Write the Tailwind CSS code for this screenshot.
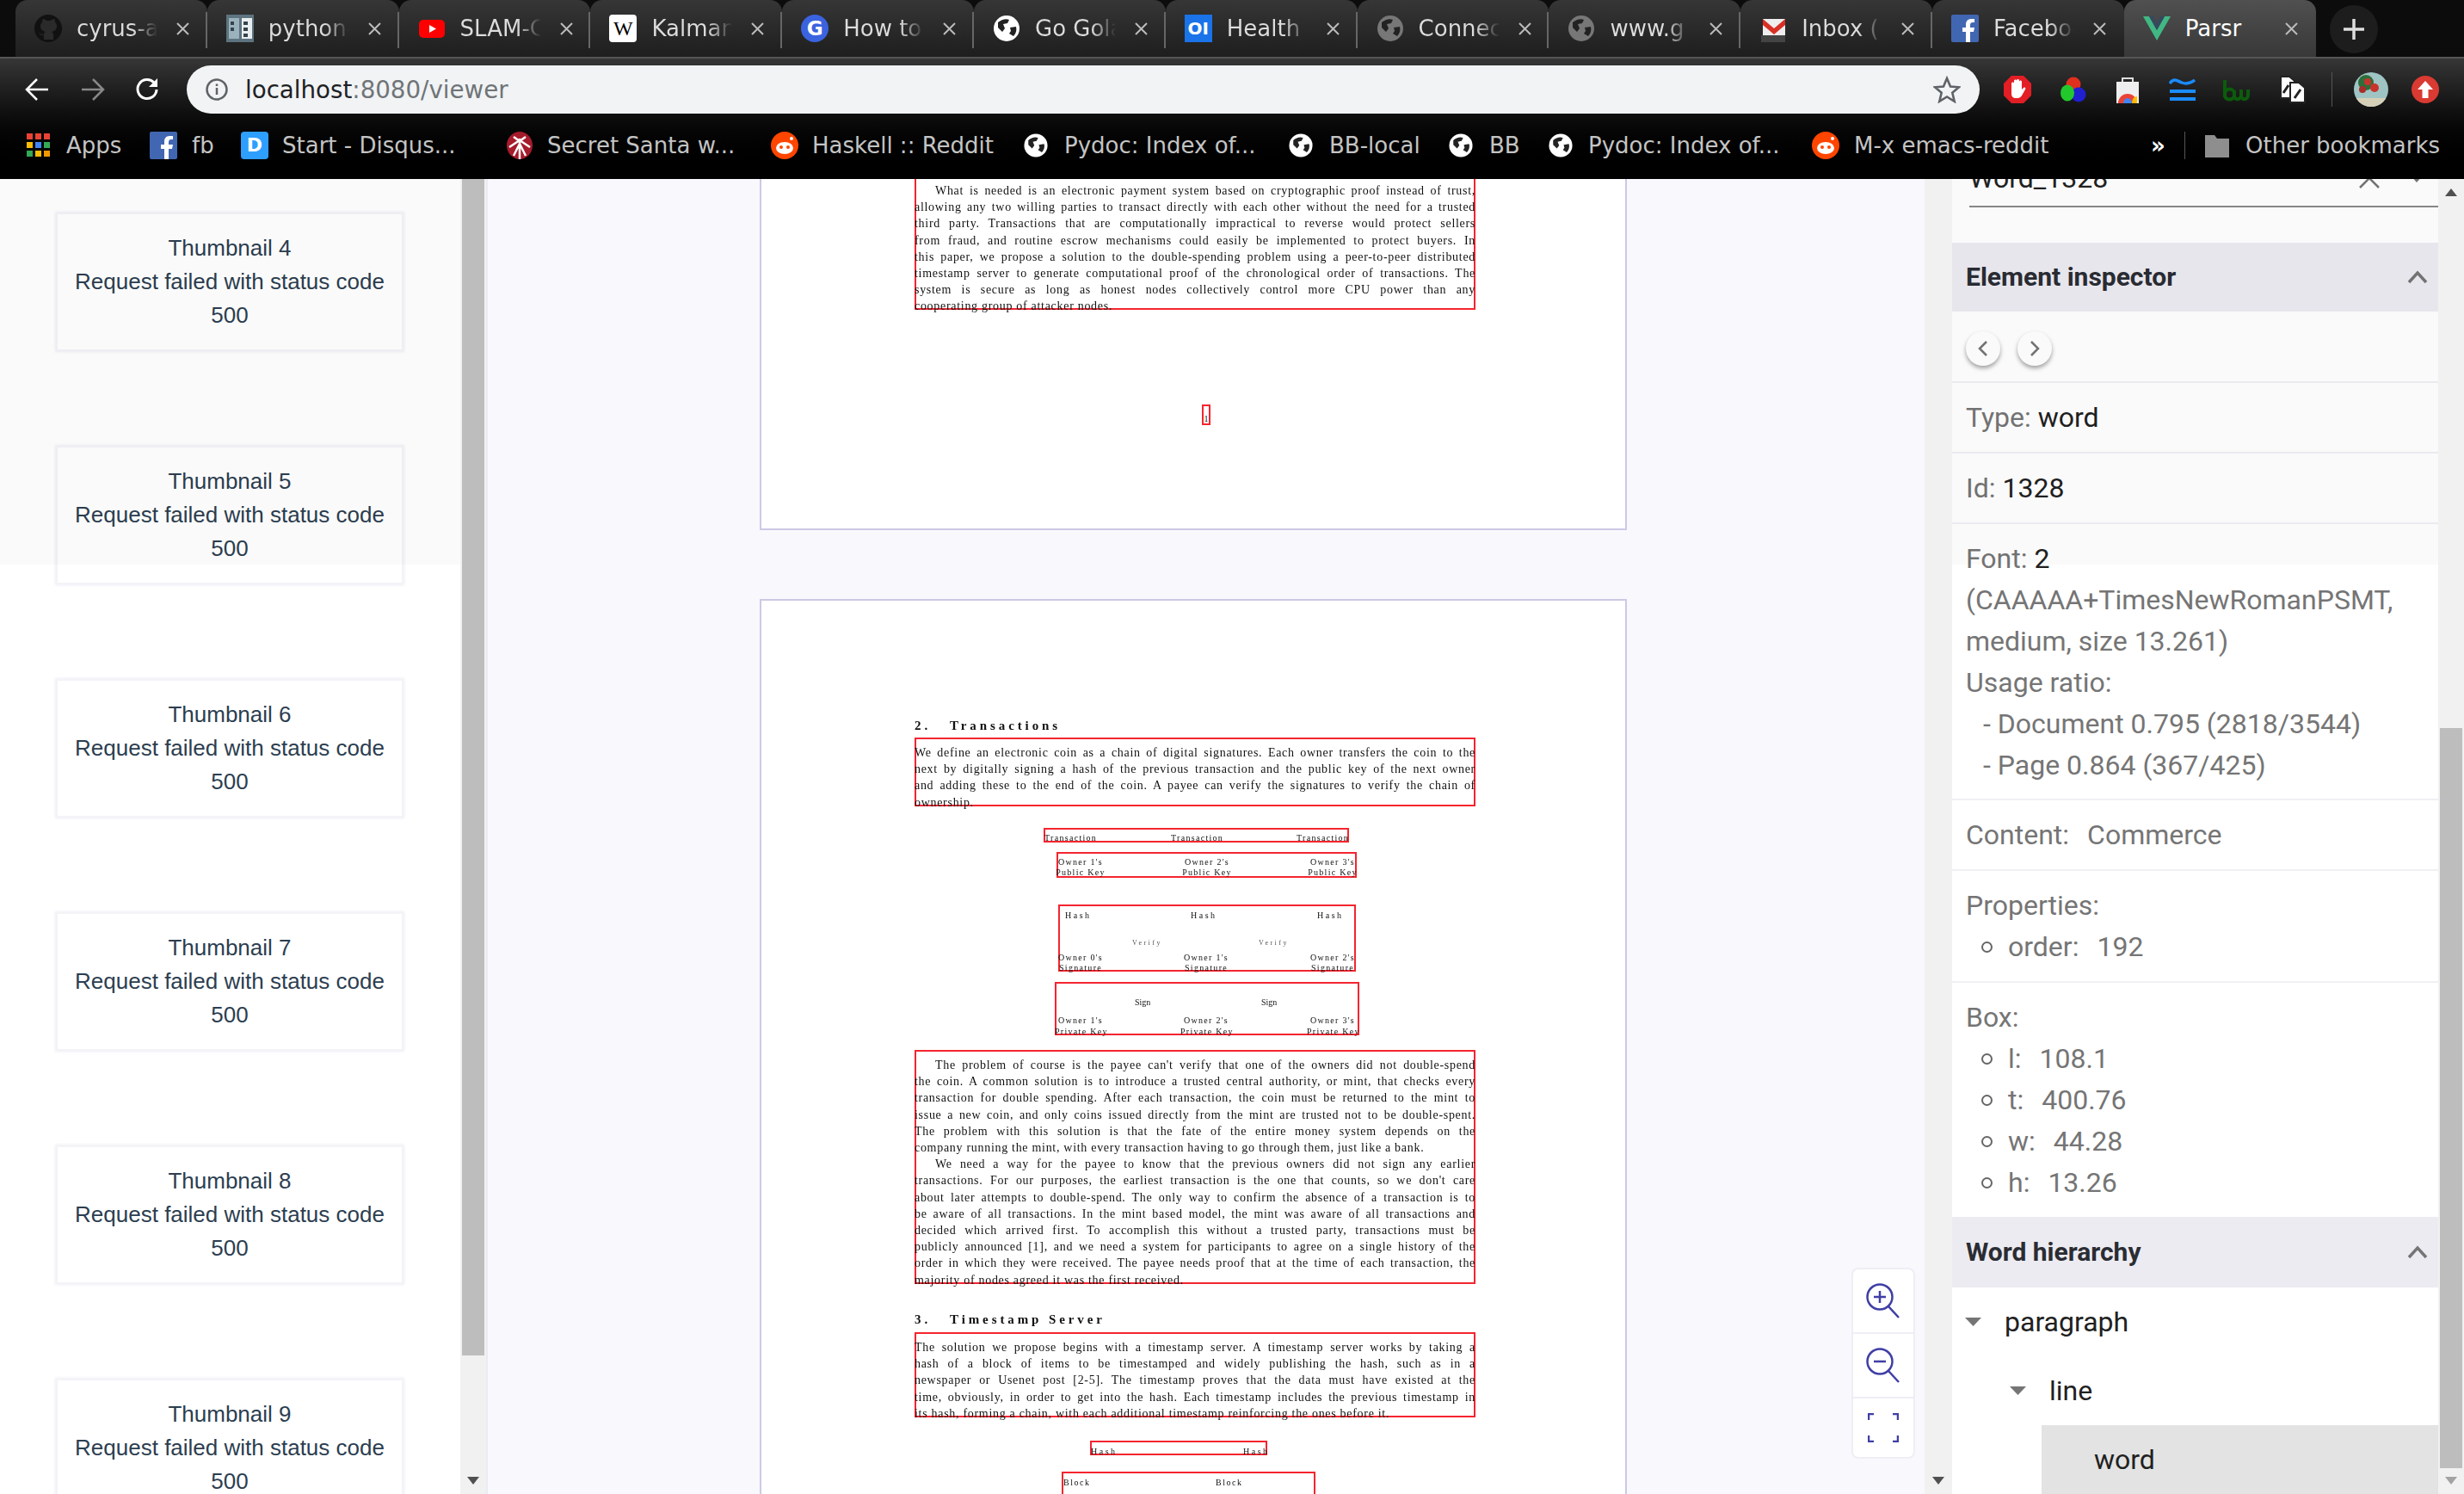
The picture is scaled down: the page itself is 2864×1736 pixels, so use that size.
<!DOCTYPE html>
<html><head><meta charset="utf-8"><title>Parsr</title>
<script src="https://cdn.jsdelivr.net/npm/@tailwindcss/browser@4"></script></head>
<body class="w-[2864px] h-[1736px] overflow-hidden bg-white font-['Roboto',sans-serif]">
<!-- browser chrome -->
<header class="h-[208px] bg-linear-to-b from-[#363636] from-[33%] via-[#0c0c0c] via-[66%] to-black text-[#c4c4c4] font-['DejaVu_Sans',sans-serif]">
  <div class="h-[66px] bg-[#0c0c0c] flex pl-[18px] items-stretch">
    <div class="w-[222.8px] h-[66px] rounded-t-[14px] bg-linear-to-b from-[#363636] to-[#1e1e1e] border-r-2 border-[#555] [border-image:linear-gradient(transparent_22%,#666_22%,#666_84%,transparent_84%)_1] flex items-center pl-[22px] gap-[17px] relative">
      <svg class="w-8 h-8 shrink-0" viewBox="0 0 32 32"><circle cx="16" cy="16" r="16" fill="#111"/><path d="M11 29v-5c-4 1-5-2-6-3 3 1 4 3 6 2 0-2 1-3 2-3-4-1-6-3-6-7 0-2 1-3 2-4 0-2 0-3 1-4 2 0 3 1 4 2h5c1-1 2-2 4-2 1 1 1 2 1 4 1 1 2 2 2 4 0 4-2 6-6 7 1 1 2 2 2 3v6z" fill="#2a2a2a"/></svg>
      <span class="w-[94px] overflow-hidden whitespace-nowrap text-[26px] bg-linear-to-r from-[#ddd] from-70% to-transparent bg-clip-text text-transparent">cyrus-a</span>
      <svg class="w-[15px] h-[15px] absolute left-[187px] top-[26px]" viewBox="0 0 15 15"><path d="M1 1l13 13M14 1L1 14" stroke="#bbb" stroke-width="2"/></svg>
    </div>
    <div class="w-[222.8px] h-[66px] rounded-t-[14px] bg-linear-to-b from-[#363636] to-[#1e1e1e] border-r-2 border-[#555] [border-image:linear-gradient(transparent_22%,#666_22%,#666_84%,transparent_84%)_1] flex items-center pl-[22px] gap-[17px] relative">
      <svg class="w-8 h-8 shrink-0" viewBox="0 0 32 32"><rect width="32" height="32" fill="#5d7480"/><rect x="3" y="4" width="12" height="24" fill="#9bb2bd"/><rect x="18" y="4" width="12" height="24" fill="#e8eef0"/><path d="M5 8h4v4H5zm0 7h4v4H5zm15-7h5v4h-5zm0 7h5v4h-5zm0 7h5v4h-5z" fill="#33434c"/></svg>
      <span class="w-[94px] overflow-hidden whitespace-nowrap text-[26px] bg-linear-to-r from-[#ddd] from-70% to-transparent bg-clip-text text-transparent">python-</span>
      <svg class="w-[15px] h-[15px] absolute left-[187px] top-[26px]" viewBox="0 0 15 15"><path d="M1 1l13 13M14 1L1 14" stroke="#bbb" stroke-width="2"/></svg>
    </div>
    <div class="w-[222.8px] h-[66px] rounded-t-[14px] bg-linear-to-b from-[#363636] to-[#1e1e1e] border-r-2 border-[#555] [border-image:linear-gradient(transparent_22%,#666_22%,#666_84%,transparent_84%)_1] flex items-center pl-[22px] gap-[17px] relative">
      <svg class="w-8 h-8 shrink-0" viewBox="0 0 32 32"><rect x="1" y="6" width="30" height="21" rx="5" fill="#f00"/><path d="M13 12l8 4.500-8 4.500z" fill="#fff"/></svg>
      <span class="w-[94px] overflow-hidden whitespace-nowrap text-[26px] bg-linear-to-r from-[#ddd] from-70% to-transparent bg-clip-text text-transparent">SLAM-C</span>
      <svg class="w-[15px] h-[15px] absolute left-[187px] top-[26px]" viewBox="0 0 15 15"><path d="M1 1l13 13M14 1L1 14" stroke="#bbb" stroke-width="2"/></svg>
    </div>
    <div class="w-[222.8px] h-[66px] rounded-t-[14px] bg-linear-to-b from-[#363636] to-[#1e1e1e] border-r-2 border-[#555] [border-image:linear-gradient(transparent_22%,#666_22%,#666_84%,transparent_84%)_1] flex items-center pl-[22px] gap-[17px] relative">
      <div class="w-8 h-8 shrink-0 bg-white rounded-[4px] flex items-center justify-center text-black text-[24px] font-['Liberation_Serif',serif] leading-none">W</div>
      <span class="w-[94px] overflow-hidden whitespace-nowrap text-[26px] bg-linear-to-r from-[#ddd] from-70% to-transparent bg-clip-text text-transparent">Kalman</span>
      <svg class="w-[15px] h-[15px] absolute left-[187px] top-[26px]" viewBox="0 0 15 15"><path d="M1 1l13 13M14 1L1 14" stroke="#bbb" stroke-width="2"/></svg>
    </div>
    <div class="w-[222.8px] h-[66px] rounded-t-[14px] bg-linear-to-b from-[#363636] to-[#1e1e1e] border-r-2 border-[#555] [border-image:linear-gradient(transparent_22%,#666_22%,#666_84%,transparent_84%)_1] flex items-center pl-[22px] gap-[17px] relative">
      <div class="w-8 h-8 shrink-0 bg-[#3b63e0] rounded-full flex items-center justify-center text-white text-[23px] font-bold leading-none">G</div>
      <span class="w-[94px] overflow-hidden whitespace-nowrap text-[26px] bg-linear-to-r from-[#ddd] from-70% to-transparent bg-clip-text text-transparent">How to</span>
      <svg class="w-[15px] h-[15px] absolute left-[187px] top-[26px]" viewBox="0 0 15 15"><path d="M1 1l13 13M14 1L1 14" stroke="#bbb" stroke-width="2"/></svg>
    </div>
    <div class="w-[222.8px] h-[66px] rounded-t-[14px] bg-linear-to-b from-[#363636] to-[#1e1e1e] border-r-2 border-[#555] [border-image:linear-gradient(transparent_22%,#666_22%,#666_84%,transparent_84%)_1] flex items-center pl-[22px] gap-[17px] relative">
      <svg class="w-8 h-8 shrink-0" viewBox="0 0 32 32"><circle cx="16" cy="16" r="15" fill="#fff"/><path d="M6 9c4-3 9-5 13-3l-2 4-5 1 2 5-3 4-5-5zM20 15l7-1c1 4 0 8-3 11l-5-3 2-3z" fill="#222"/></svg>
      <span class="w-[94px] overflow-hidden whitespace-nowrap text-[26px] bg-linear-to-r from-[#ddd] from-70% to-transparent bg-clip-text text-transparent">Go Gola</span>
      <svg class="w-[15px] h-[15px] absolute left-[187px] top-[26px]" viewBox="0 0 15 15"><path d="M1 1l13 13M14 1L1 14" stroke="#bbb" stroke-width="2"/></svg>
    </div>
    <div class="w-[222.8px] h-[66px] rounded-t-[14px] bg-linear-to-b from-[#363636] to-[#1e1e1e] border-r-2 border-[#555] [border-image:linear-gradient(transparent_22%,#666_22%,#666_84%,transparent_84%)_1] flex items-center pl-[22px] gap-[17px] relative">
      <div class="w-8 h-8 shrink-0 bg-[#1a73e8] flex items-center justify-center text-white text-[20px] font-bold leading-none">OI</div>
      <span class="w-[94px] overflow-hidden whitespace-nowrap text-[26px] bg-linear-to-r from-[#ddd] from-70% to-transparent bg-clip-text text-transparent">Health</span>
      <svg class="w-[15px] h-[15px] absolute left-[187px] top-[26px]" viewBox="0 0 15 15"><path d="M1 1l13 13M14 1L1 14" stroke="#bbb" stroke-width="2"/></svg>
    </div>
    <div class="w-[222.8px] h-[66px] rounded-t-[14px] bg-linear-to-b from-[#363636] to-[#1e1e1e] border-r-2 border-[#555] [border-image:linear-gradient(transparent_22%,#666_22%,#666_84%,transparent_84%)_1] flex items-center pl-[22px] gap-[17px] relative">
      <svg class="w-8 h-8 shrink-0" viewBox="0 0 32 32"><circle cx="16" cy="16" r="15" fill="#777"/><path d="M6 9c4-3 9-5 13-3l-2 4-5 1 2 5-3 4-5-5zM20 15l7-1c1 4 0 8-3 11l-5-3 2-3z" fill="#222"/></svg>
      <span class="w-[94px] overflow-hidden whitespace-nowrap text-[26px] bg-linear-to-r from-[#ddd] from-70% to-transparent bg-clip-text text-transparent">Connec</span>
      <svg class="w-[15px] h-[15px] absolute left-[187px] top-[26px]" viewBox="0 0 15 15"><path d="M1 1l13 13M14 1L1 14" stroke="#bbb" stroke-width="2"/></svg>
    </div>
    <div class="w-[222.8px] h-[66px] rounded-t-[14px] bg-linear-to-b from-[#363636] to-[#1e1e1e] border-r-2 border-[#555] [border-image:linear-gradient(transparent_22%,#666_22%,#666_84%,transparent_84%)_1] flex items-center pl-[22px] gap-[17px] relative">
      <svg class="w-8 h-8 shrink-0" viewBox="0 0 32 32"><circle cx="16" cy="16" r="15" fill="#777"/><path d="M6 9c4-3 9-5 13-3l-2 4-5 1 2 5-3 4-5-5zM20 15l7-1c1 4 0 8-3 11l-5-3 2-3z" fill="#222"/></svg>
      <span class="w-[94px] overflow-hidden whitespace-nowrap text-[26px] bg-linear-to-r from-[#ddd] from-70% to-transparent bg-clip-text text-transparent">www.g</span>
      <svg class="w-[15px] h-[15px] absolute left-[187px] top-[26px]" viewBox="0 0 15 15"><path d="M1 1l13 13M14 1L1 14" stroke="#bbb" stroke-width="2"/></svg>
    </div>
    <div class="w-[222.8px] h-[66px] rounded-t-[14px] bg-linear-to-b from-[#363636] to-[#1e1e1e] border-r-2 border-[#555] [border-image:linear-gradient(transparent_22%,#666_22%,#666_84%,transparent_84%)_1] flex items-center pl-[22px] gap-[17px] relative">
      <svg class="w-8 h-8 shrink-0" viewBox="0 0 32 32"><rect x="4" y="5" width="26" height="20" fill="#eee"/><path d="M4 5l13 11L30 5v7L17 23 4 12z" fill="#d93025"/><rect x="2" y="24" width="28" height="8" fill="#444"/></svg>
      <span class="w-[94px] overflow-hidden whitespace-nowrap text-[26px] bg-linear-to-r from-[#ddd] from-70% to-transparent bg-clip-text text-transparent">Inbox (</span>
      <svg class="w-[15px] h-[15px] absolute left-[187px] top-[26px]" viewBox="0 0 15 15"><path d="M1 1l13 13M14 1L1 14" stroke="#bbb" stroke-width="2"/></svg>
    </div>
    <div class="w-[222.8px] h-[66px] rounded-t-[14px] bg-linear-to-b from-[#363636] to-[#1e1e1e] flex items-center pl-[22px] gap-[17px] relative">
      <svg class="w-8 h-8 shrink-0" viewBox="0 0 32 32"><rect width="32" height="32" rx="2" fill="#4267b2"/><path d="M22 32V20h4l1-5h-5v-3c0-2 1-3 3-3h2V5h-4c-4 0-6 3-6 6v4h-4v5h4v12z" fill="#fff"/></svg>
      <span class="w-[94px] overflow-hidden whitespace-nowrap text-[26px] bg-linear-to-r from-[#ddd] from-70% to-transparent bg-clip-text text-transparent">Faceboo</span>
      <svg class="w-[15px] h-[15px] absolute left-[187px] top-[26px]" viewBox="0 0 15 15"><path d="M1 1l13 13M14 1L1 14" stroke="#bbb" stroke-width="2"/></svg>
    </div>
    <div class="w-[222.8px] h-[66px] rounded-t-[14px] bg-linear-to-b from-[#505050] to-[#383838] flex items-center pl-[22px] gap-[17px] relative">
      <svg class="w-8 h-8 shrink-0" viewBox="0 0 32 32"><path d="M0 2h7l9 16 9-16h7L16 30z" fill="#41b883"/><path d="M7 2h5l4 8 4-8h5l-9 16z" fill="#35495e"/></svg>
      <span class="w-[94px] overflow-hidden whitespace-nowrap text-[26px] text-white">Parsr</span>
      <svg class="w-[15px] h-[15px] absolute left-[187px] top-[26px]" viewBox="0 0 15 15"><path d="M1 1l13 13M14 1L1 14" stroke="#bbb" stroke-width="2"/></svg>
    </div>
    <div class="ml-[16px] mt-[6px] w-[56px] h-[56px] rounded-full bg-[#1d1d1d] flex items-center justify-center">
      <svg class="w-[26px] h-[26px]" viewBox="0 0 26 26"><path d="M13 1v24M1 13h24" stroke="#ddd" stroke-width="3.500"/></svg>
    </div>
  </div>
  <div class="h-[2px] bg-[#555]"></div>
  <!-- toolbar -->
  <div class="h-[64px] flex items-center relative pt-[8px]">
    <svg class="w-[30px] h-[30px] ml-[28px] shrink-0" viewBox="0 0 30 30"><path d="M28 15H4M15 3L3 15l12 12" fill="none" stroke="#fff" stroke-width="2.500"/></svg>
    <svg class="w-[30px] h-[30px] ml-[35px] shrink-0" viewBox="0 0 30 30"><path d="M2 15h24M15 3l12 12-12 12" fill="none" stroke="#888" stroke-width="2.500"/></svg>
    <svg class="w-[30px] h-[30px] ml-[34px] shrink-0" viewBox="0 0 30 30"><path d="M25 15a11 11 0 1 1-3-8" fill="none" stroke="#fff" stroke-width="3"/><path d="M26 2v10H16z" fill="#fff"/></svg>
    <div class="ml-[30px] w-[2084px] h-[56px] rounded-full bg-[#f1f3f4] flex items-center pl-[22px] pr-[22px] shrink-0">
      <svg class="w-[26px] h-[26px] shrink-0" viewBox="0 0 26 26"><circle cx="13" cy="13" r="11.500" fill="none" stroke="#5f6368" stroke-width="2.500"/><path d="M13 11v8M13 6.500v2.500" stroke="#5f6368" stroke-width="2.500"/></svg>
      <span class="ml-[20px] mt-[2px] text-[27.700px] text-[#202124] leading-none">localhost<span class="text-[#6f7478]">:8080/viewer</span></span>
      <svg class="w-[32px] h-[32px] ml-auto" viewBox="0 0 32 32"><path d="M16 3l4 9.500 10 .8-7.700 6.500 2.400 10L16 24.500 7.300 29.800l2.400-10L2 13.300l10-.8z" fill="none" stroke="#5f6368" stroke-width="2.600"/></svg>
    </div>
    <div class="flex items-center ml-[28px]">
      <svg class="w-8 h-8" viewBox="0 0 32 32"><path d="M9 0h14l9 9v14l-9 9H9l-9-9V9z" fill="#e31e24"/><path d="M9 15V9c0-2 3-2 3 0V6c0-2 3-2 3 0v-.500c0-2 3-2 3 0V7c0-2 3-2 3 0v9l2-2c2-1 3 0 2 2l-4 7c-1 2-3 3-5 3h-2c-3 0-5-2-5-5z" fill="#fff"/></svg>
      <svg class="w-8 h-8 ml-[32px]" viewBox="0 0 32 32"><circle cx="17" cy="10" r="8.500" fill="#e0301e"/><circle cx="23" cy="22" r="8.500" fill="#2020d0"/><ellipse cx="10" cy="20" rx="8" ry="9.500" fill="#22c92c"/></svg>
      <svg class="w-8 h-8 ml-[32px]" viewBox="0 0 32 32"><path d="M10 8V3h12v5" fill="none" stroke="#ddd" stroke-width="2"/><rect x="3" y="7" width="26" height="25" fill="#eee"/><path d="M5 32a11 11 0 0 1 22 0z" fill="#ea4335"/><path d="M11 32a5 6 0 0 1 10 0z" fill="#4285f4"/><path d="M21 32a6 8 0 0 1 6-8v8z" fill="#fbbc05"/></svg>
      <svg class="w-8 h-8 ml-[32px]" viewBox="0 0 32 32"><path d="M1 9c5-7 9-3 14-1s10 1 15-3" fill="none" stroke="#1a8cff" stroke-width="3.500"/><path d="M1 18h30M1 27h30" stroke="#1a8cff" stroke-width="4"/></svg>
      <svg class="w-8 h-8 ml-[30px]" viewBox="0 0 32 32"><path d="M3 5v19a6 6 0 0 0 11 0V17m-11 4a5 5 0 1 1 11 0m0 1c0 8 8 6 8 0v-6m0 6c0 8 8 6 8 0v-6" fill="none" stroke="#0c5c0c" stroke-width="4"/></svg>
      <svg class="w-8 h-8 ml-[34px]" viewBox="0 0 32 32"><path d="M2 1h10l6 5v20H2z" fill="#fff" stroke="#222" stroke-width="2"/><path d="M13 8h10l7 6v17H13z" fill="#fff" stroke="#222" stroke-width="2"/><path d="M5 20l6-9M18 26l7-10" stroke="#222" stroke-width="3"/></svg>
      <div class="w-px h-[40px] bg-[#555] ml-[29px]"></div>
      <svg class="w-[40px] h-[40px] ml-[25px]" viewBox="0 0 40 40"><defs><clipPath id="av"><circle cx="20" cy="20" r="20"/></clipPath></defs><g clip-path="url(#av)"><rect width="40" height="40" fill="#9fc4c4"/><rect y="30" width="40" height="10" fill="#d6cfb8"/><circle cx="14" cy="12" r="9" fill="#2f6d3a"/><circle cx="16" cy="11" r="4" fill="#c8342c"/><circle cx="24" cy="18" r="5" fill="#c8342c"/><circle cx="10" cy="20" r="4" fill="#a82c28"/></g></svg>
      <svg class="w-8 h-8 ml-[27px]" viewBox="0 0 32 32"><circle cx="16" cy="16" r="16" fill="#d93a32"/><path d="M16 6l9 10h-5.500v10h-7V16H7z" fill="#fff"/></svg>
    </div>
  </div>
  <!-- bookmarks -->
  <div class="h-[76px] flex items-center text-[26px] leading-none pb-[3px] relative">
    <div class="w-[143px] ml-[31px] flex items-center gap-[19px]"><svg class="w-[27px] h-[27px]" viewBox="0 0 27 27"><path d="M0 0h7v7H0z" fill="#ea4335"/><path d="M10 0h7v7h-7z" fill="#ea4335"/><path d="M20 0h7v7h-7z" fill="#ea4335"/><path d="M0 10h7v7H0z" fill="#fbbc05"/><path d="M10 10h7v7h-7z" fill="#4285f4"/><path d="M20 10h7v7h-7z" fill="#34a853"/><path d="M0 20h7v7H0z" fill="#34a853"/><path d="M10 20h7v7h-7z" fill="#fbbc05"/><path d="M20 20h7v7h-7z" fill="#f29900"/></svg><span>Apps</span></div>
    <div class="w-[106px] flex items-center gap-[17px]"><svg class="w-8 h-8" viewBox="0 0 32 32"><rect width="32" height="32" rx="2" fill="#4267b2"/><path d="M22 32V20h4l1-5h-5v-3c0-2 1-3 3-3h2V5h-4c-4 0-6 3-6 6v4h-4v5h4v12z" fill="#fff"/></svg><span>fb</span></div>
    <div class="w-[309px] flex items-center gap-[16px]"><div class="w-8 h-8 rounded-[4px] bg-[#2e9fff] flex items-center justify-center text-white font-bold text-[22px]">D</div><span>Start - Disqus...</span></div>
    <div class="w-[307px] flex items-center gap-[17px]"><svg class="w-[30px] h-8" viewBox="0 0 30 32"><ellipse cx="15" cy="16" rx="15" ry="16" fill="#a51c2c"/><path d="M15 8v24M3 18l12-8 12 8M8 6l7 5 7-5M8 28l7-14 7 14" fill="none" stroke="#fff" stroke-width="2.500"/></svg><span>Secret Santa w...</span></div>
    <div class="w-[294px] flex items-center gap-[16px]"><svg class="w-8 h-8" viewBox="0 0 32 32"><circle cx="16" cy="16" r="16" fill="#ff4500"/><ellipse cx="16" cy="19" rx="10" ry="7" fill="#fff"/><circle cx="24" cy="8" r="2" fill="#fff"/><circle cx="12" cy="18" r="2" fill="#ff4500"/><circle cx="20" cy="18" r="2" fill="#ff4500"/></svg><span>Haskell :: Reddit</span></div>
    <div class="w-[308px] flex items-center gap-[19px]"><svg class="w-7 h-7" viewBox="0 0 32 32"><circle cx="16" cy="16" r="15.500" fill="#fff"/><path d="M6 9c4-3 9-5 13-3l-2 4-5 1 2 5-3 4-5-5zM20 15l7-1c1 4 0 8-3 11l-5-3 2-3z" fill="#222"/></svg><span>Pydoc: Index of...</span></div>
    <div class="w-[186px] flex items-center gap-[19px]"><svg class="w-7 h-7" viewBox="0 0 32 32"><circle cx="16" cy="16" r="15.500" fill="#fff"/><path d="M6 9c4-3 9-5 13-3l-2 4-5 1 2 5-3 4-5-5zM20 15l7-1c1 4 0 8-3 11l-5-3 2-3z" fill="#222"/></svg><span>BB-local</span></div>
    <div class="w-[116px] flex items-center gap-[19px]"><svg class="w-7 h-7" viewBox="0 0 32 32"><circle cx="16" cy="16" r="15.500" fill="#fff"/><path d="M6 9c4-3 9-5 13-3l-2 4-5 1 2 5-3 4-5-5zM20 15l7-1c1 4 0 8-3 11l-5-3 2-3z" fill="#222"/></svg><span>BB</span></div>
    <div class="w-[306px] flex items-center gap-[18px]"><svg class="w-7 h-7" viewBox="0 0 32 32"><circle cx="16" cy="16" r="15.500" fill="#fff"/><path d="M6 9c4-3 9-5 13-3l-2 4-5 1 2 5-3 4-5-5zM20 15l7-1c1 4 0 8-3 11l-5-3 2-3z" fill="#222"/></svg><span>Pydoc: Index of...</span></div>
    <div class="w-[394px] flex items-center gap-[17px]"><svg class="w-8 h-8" viewBox="0 0 32 32"><circle cx="16" cy="16" r="16" fill="#ff4500"/><ellipse cx="16" cy="19" rx="10" ry="7" fill="#fff"/><circle cx="24" cy="8" r="2" fill="#fff"/><circle cx="12" cy="18" r="2" fill="#ff4500"/><circle cx="20" cy="18" r="2" fill="#ff4500"/></svg><span>M-x emacs-reddit</span></div>
    <span class="text-white w-[39px] font-bold">»</span>
    <div class="w-px h-[32px] bg-[#555]"></div>
    <svg class="w-[28px] h-[28px] ml-[23px]" viewBox="0 0 28 28"><path d="M0 2h11l3 4h14v22H0z" fill="#8e8e8e"/></svg>
    <span class="ml-[19px] whitespace-nowrap">Other bookmarks</span>
  </div>
</header>
<!-- app -->
<main class="h-[1528px] flex relative">
  <!-- thumbnails -->
  <aside class="w-[567px] h-full flex border-r-2 border-[#ebebf5] shrink-0">
    <div class="w-[535px] h-full overflow-hidden pt-[41px] pl-[67px] flex flex-col gap-[114px] font-['Liberation_Sans',sans-serif] text-[26px] leading-[39px] text-[#2c3e50] text-center relative">
      <div class="w-[400px] h-[157px] shrink-0 p-[20px] bg-white shadow-[0_0_0_2px_#f3f3f8,0_0_3px_3px_#eeeef5]">Thumbnail 4<br>Request failed with status code 500</div>
      <div class="w-[400px] h-[157px] shrink-0 p-[20px] bg-white shadow-[0_0_0_2px_#f3f3f8,0_0_3px_3px_#eeeef5]">Thumbnail 5<br>Request failed with status code 500</div>
      <div class="w-[400px] h-[157px] shrink-0 p-[20px] bg-white shadow-[0_0_0_2px_#f3f3f8,0_0_3px_3px_#eeeef5]">Thumbnail 6<br>Request failed with status code 500</div>
      <div class="w-[400px] h-[157px] shrink-0 p-[20px] bg-white shadow-[0_0_0_2px_#f3f3f8,0_0_3px_3px_#eeeef5]">Thumbnail 7<br>Request failed with status code 500</div>
      <div class="w-[400px] h-[157px] shrink-0 p-[20px] bg-white shadow-[0_0_0_2px_#f3f3f8,0_0_3px_3px_#eeeef5]">Thumbnail 8<br>Request failed with status code 500</div>
      <div class="w-[400px] h-[157px] shrink-0 p-[20px] bg-white shadow-[0_0_0_2px_#f3f3f8,0_0_3px_3px_#eeeef5]">Thumbnail 9<br>Request failed with status code 500</div>
      <div class="absolute left-0 top-0 w-full h-[448px] bg-black/[0.02] pointer-events-none"></div>
    </div>
    <div class="w-[30px] h-full bg-[#f1f1f1] flex flex-col px-[2px]">
      <div class="h-[1367px] bg-[#bdbdbd]"></div>
      <svg class="w-[14px] h-[9px] mt-auto mb-[11px] ml-[6px]" viewBox="0 0 14 9"><path d="M0 0h14L7 9z" fill="#505050"/></svg>
    </div>
  </aside>
  <!-- document -->
  <section class="w-[1670px] h-full bg-[#f9f8fd] overflow-hidden flex flex-col items-center pr-[30px] font-['Liberation_Serif',serif] text-[#111] relative">
    <!-- page 1 -->
    <div class="w-[1008px] h-[408px] shrink-0 bg-white border-2 border-t-0 border-[#ccc9e6] pl-[178px] relative">
      <div class="w-[652px] h-[152px] border-2 border-t-0 border-[#f4252f]">
        <div class="text-[14px] tracking-[0.7px] leading-[19.2px] -mx-[2px] pt-[4px] blur-[0.25px]">
          <div class="[text-align-last:justify] indent-[24px]">What is needed is an electronic payment system based on cryptographic proof instead of trust,</div>
          <div class="[text-align-last:justify]">allowing any two willing parties to transact directly with each other without the need for a trusted</div>
          <div class="[text-align-last:justify]">third party.  Transactions that are computationally impractical to reverse would protect sellers</div>
          <div class="[text-align-last:justify]">from fraud, and routine escrow mechanisms could easily be implemented to protect buyers.  In</div>
          <div class="[text-align-last:justify]">this paper, we propose a solution to the double-spending problem using a peer-to-peer distributed</div>
          <div class="[text-align-last:justify]">timestamp server to generate computational proof of the chronological order of transactions.  The</div>
          <div class="[text-align-last:justify]">system is secure as long as honest nodes collectively control more CPU power than any</div>
          <div>cooperating group of attacker nodes.</div>
        </div>
      </div>
      <div class="w-[10px] h-[24px] border-2 border-[#f4252f] ml-[334px] mt-[110px] flex justify-center items-end text-[10px] leading-none">1</div>
    </div>
    <!-- page 2 -->
    <div class="w-[1008px] h-[1100px] shrink-0 mt-[80px] bg-white border-2 border-[#ccc9e6] pl-[178px] pt-[135px] relative">
      <h2 class="font-bold text-[15px] tracking-[3.900px] leading-[20px] h-[24px] whitespace-nowrap blur-[0.25px]"><span class="inline-block w-[41px]">2.</span>Transactions</h2>
      <div class="w-[652px] h-[80px] border-2 border-[#f4252f] text-[14px] tracking-[0.7px] leading-[19.2px]">
        <div class="-mx-[2px] pt-[6px] blur-[0.25px]">
          <div class="[text-align-last:justify]">We define an electronic coin as a chain of digital signatures.  Each owner transfers the coin to the</div>
          <div class="[text-align-last:justify]">next by digitally signing a hash of the previous transaction and the public key of the next owner</div>
          <div class="[text-align-last:justify]">and adding these to the end of the coin.  A payee can verify the signatures to verify the chain of</div>
          <div>ownership.</div>
        </div>
      </div>
      <!-- diagram -->
      <div class="relative w-[652px] h-[283px] text-[10px] tracking-[1.300px] leading-none text-center [&>span]:blur-[0.25px]">
        <div class="absolute left-[150px] top-[25px] w-[355px] h-[17px] border-2 border-[#f4252f]"></div>
        <span class="absolute left-[151px] top-[32px]">Transaction</span><span class="absolute left-[298px] top-[32px]">Transaction</span><span class="absolute left-[444px] top-[32px]">Transaction</span>
        <div class="absolute left-[165px] top-[53px] w-[349px] h-[30px] border-2 border-[#f4252f]"></div>
        <span class="absolute left-[163px] top-[60px] w-[60px] whitespace-nowrap">Owner 1's<br><span class="block mt-[2px]">Public Key</span></span><span class="absolute left-[310px] top-[60px] w-[60px] whitespace-nowrap">Owner 2's<br><span class="block mt-[2px]">Public Key</span></span><span class="absolute left-[456px] top-[60px] w-[60px] whitespace-nowrap">Owner 3's<br><span class="block mt-[2px]">Public Key</span></span>
        <div class="absolute left-[167px] top-[114px] w-[346px] h-[78px] border-2 border-[#f4252f]"></div>
        <span class="absolute left-[175px] top-[122px] tracking-[2.500px]">Hash</span><span class="absolute left-[321px] top-[122px] tracking-[2.500px]">Hash</span><span class="absolute left-[468px] top-[122px] tracking-[2.500px]">Hash</span>
        <span class="absolute left-[253px] top-[155px] text-[8px] tracking-[2.500px] text-[#555]">Verify</span><span class="absolute left-[400px] top-[155px] text-[8px] tracking-[2.500px] text-[#555]">Verify</span>
        <span class="absolute left-[163px] top-[171px] w-[60px] whitespace-nowrap">Owner 0's<br><span class="block mt-[2px]">Signature</span></span><span class="absolute left-[309px] top-[171px] w-[60px] whitespace-nowrap">Owner 1's<br><span class="block mt-[2px]">Signature</span></span><span class="absolute left-[456px] top-[171px] w-[60px] whitespace-nowrap">Owner 2's<br><span class="block mt-[2px]">Signature</span></span>
        <div class="absolute left-[163px] top-[204px] w-[354px] h-[62px] border-2 border-[#f4252f]"></div>
        <span class="absolute left-[256px] top-[223px] tracking-[0px]">Sign</span><span class="absolute left-[403px] top-[223px] tracking-[0px]">Sign</span>
        <span class="absolute left-[163px] top-[244px] w-[60px] whitespace-nowrap">Owner 1's<br><span class="block mt-[3px]">Private Key</span></span><span class="absolute left-[309px] top-[244px] w-[60px] whitespace-nowrap">Owner 2's<br><span class="block mt-[3px]">Private Key</span></span><span class="absolute left-[456px] top-[244px] w-[60px] whitespace-nowrap">Owner 3's<br><span class="block mt-[3px]">Private Key</span></span>
      </div>
      <div class="w-[652px] h-[272px] border-2 border-[#f4252f] text-[14px] tracking-[0.7px] leading-[19.2px]">
        <div class="-mx-[2px] pt-[6px] blur-[0.25px]">
          <div class="[text-align-last:justify] indent-[24px]">The problem of course is the payee can't verify that one of the owners did not double-spend</div>
          <div class="[text-align-last:justify]">the coin.  A common solution is to introduce a trusted central authority, or mint, that checks every</div>
          <div class="[text-align-last:justify]">transaction for double spending.  After each transaction, the coin must be returned to the mint to</div>
          <div class="[text-align-last:justify]">issue a new coin, and only coins issued directly from the mint are trusted not to be double-spent.</div>
          <div class="[text-align-last:justify]">The problem with this solution is that the fate of the entire money system depends on the</div>
          <div>company running the mint, with every transaction having to go through them, just like a bank.</div>
          <div class="[text-align-last:justify] indent-[24px]">We need a way for the payee to know that the previous owners did not sign any earlier</div>
          <div class="[text-align-last:justify]">transactions.  For our purposes, the earliest transaction is the one that counts, so we don't care</div>
          <div class="[text-align-last:justify]">about later attempts to double-spend.  The only way to confirm the absence of a transaction is to</div>
          <div class="[text-align-last:justify]">be aware of all transactions.  In the mint based model, the mint was aware of all transactions and</div>
          <div class="[text-align-last:justify]">decided which arrived first.  To accomplish this without a trusted party, transactions must be</div>
          <div class="[text-align-last:justify]">publicly announced [1], and we need a system for participants to agree on a single history of the</div>
          <div class="[text-align-last:justify]">order in which they were received.  The payee needs proof that at the time of each transaction, the</div>
          <div>majority of nodes agreed it was the first received.</div>
        </div>
      </div>
      <h2 class="font-bold text-[15px] tracking-[3.900px] leading-[20px] h-[20px] mt-[31px] mb-[5px] whitespace-nowrap blur-[0.25px]"><span class="inline-block w-[41px]">3.</span>Timestamp Server</h2>
      <div class="w-[652px] h-[99px] border-2 border-[#f4252f] text-[14px] tracking-[0.7px] leading-[19.2px]">
        <div class="-mx-[2px] pt-[6px] blur-[0.25px]">
          <div class="[text-align-last:justify]">The solution we propose begins with a timestamp server.  A timestamp server works by taking a</div>
          <div class="[text-align-last:justify]">hash of a block of items to be timestamped and widely publishing the hash, such as in a</div>
          <div class="[text-align-last:justify]">newspaper or Usenet post [2-5].  The timestamp proves that the data must have existed at the</div>
          <div class="[text-align-last:justify]">time, obviously, in order to get into the hash.  Each timestamp includes the previous timestamp in</div>
          <div>its hash, forming a chain, with each additional timestamp reinforcing the ones before it.</div>
        </div>
      </div>
      <div class="relative w-[652px] h-[100px] text-[10px] tracking-[2.500px] leading-none [&>span]:blur-[0.25px]">
        <div class="absolute left-[204px] top-[27px] w-[206px] h-[17px] border-2 border-[#f4252f]"></div>
        <span class="absolute left-[205px] top-[35px]">Hash</span><span class="absolute left-[382px] top-[35px]">Hash</span>
        <div class="absolute left-[171px] top-[63px] w-[295px] h-[60px] border-2 border-[#f4252f]"></div>
        <span class="absolute left-[173px] top-[71px] tracking-[1.500px]">Block</span><span class="absolute left-[350px] top-[71px] tracking-[1.500px]">Block</span>
      </div>
    </div>
    <!-- zoom control -->
    <div class="absolute left-[1585px] top-[1265px] w-[74px] h-[222px] rounded-[8px] bg-white border-2 border-[#eeeef5] flex flex-col">
      <div class="h-[75px] border-b-2 border-[#eeeef5] flex items-center justify-center"><svg class="w-[40px] h-[42px]" viewBox="0 0 40 42"><circle cx="16" cy="16" r="14.500" fill="none" stroke="#3f3fa5" stroke-width="2.500"/><path d="M26 27l12 13M16 9v14M9 16h14" fill="none" stroke="#3f3fa5" stroke-width="2.500"/></svg></div>
      <div class="h-[75px] border-b-2 border-[#eeeef5] flex items-center justify-center"><svg class="w-[40px] h-[42px]" viewBox="0 0 40 42"><circle cx="16" cy="16" r="14.500" fill="none" stroke="#3f3fa5" stroke-width="2.500"/><path d="M26 27l12 13M9 16h14" fill="none" stroke="#3f3fa5" stroke-width="2.500"/></svg></div>
      <div class="flex-1 flex items-center justify-center"><svg class="w-[36px] h-[34px]" viewBox="0 0 36 34"><path d="M1 8V1h6M29 1h6v7M1 26v7h6M29 33h6v-7" fill="none" stroke="#3f3fa5" stroke-width="2.500"/></svg></div>
    </div>
  </section>
  <!-- centre scrollbar -->
  <div class="w-[32px] h-full bg-[#f1f1f1] flex flex-col shrink-0">
    <svg class="w-[14px] h-[9px] mt-auto mb-[11px] ml-[9px]" viewBox="0 0 14 9"><path d="M0 0h14L7 9z" fill="#505050"/></svg>
  </div>
  <!-- inspector -->
  <aside class="w-[565px] h-full bg-white overflow-hidden text-[32px] leading-[48px] text-[#757575] shrink-0 relative">
    <div class="h-[74px] relative pl-[20px]">
      <div class="h-[33px] border-b-2 border-[#8a8a8a] text-[#222] overflow-hidden"><span class="block -mt-[25px]">Word_1328</span></div>
      <svg class="absolute left-[472px] top-[-14px] w-[26px] h-[26px]" viewBox="0 0 26 26"><path d="M2 2l22 22M24 2L2 24" stroke="#757575" stroke-width="2.500"/></svg>
      <svg class="absolute left-[533px] top-[-4px] w-[14px] h-[8px]" viewBox="0 0 14 8"><path d="M0 0h14L7 8z" fill="#757575"/></svg>
    </div>
    <div class="h-[80px] bg-[#ecebf1] flex items-center pl-[16px] pr-[12px] text-[#2a2c33] font-bold justify-between"><span class="text-[30px]">Element inspector</span><svg class="w-[24px] h-[16px]" viewBox="0 0 24 16"><path d="M2 14L12 3l10 11" fill="none" stroke="#757575" stroke-width="3.500"/></svg></div>
    <div class="h-[83px] flex items-center gap-[20px] pl-[16px] pt-[5px] border-b-2 border-[#f0eff5]">
      <div class="w-[40px] h-[40px] rounded-full bg-white shadow-[0_3px_5px_rgba(0,0,0,0.35)] flex items-center justify-center"><svg class="w-[14px] h-[20px]" viewBox="0 0 14 20"><path d="M11 2L3 10l8 8" fill="none" stroke="#757575" stroke-width="2.500"/></svg></div>
      <div class="w-[40px] h-[40px] rounded-full bg-white shadow-[0_3px_5px_rgba(0,0,0,0.35)] flex items-center justify-center"><svg class="w-[14px] h-[20px]" viewBox="0 0 14 20"><path d="M3 2l8 8-8 8" fill="none" stroke="#757575" stroke-width="2.500"/></svg></div>
    </div>
    <div class="h-[82px] flex items-center pl-[16px] border-b-2 border-[#f0eff5]"><span>Type: <span class="text-[#212121]">word</span></span></div>
    <div class="h-[82px] flex items-center pl-[16px] border-b-2 border-[#f0eff5]"><span>Id: <span class="text-[#212121]">1328</span></span></div>
    <div class="h-[321px] pl-[16px] pr-[16px] pt-[16px] border-b-2 border-[#f0eff5]">
      <div>Font: <span class="text-[#212121]">2</span></div>
      <div>(CAAAAA+TimesNewRomanPSMT, medium, size 13.261)</div>
      <div>Usage ratio:</div>
      <div class="pl-[20px]">- Document 0.795 (2818/3544)</div>
      <div class="pl-[20px]">- Page 0.864 (367/425)</div>
    </div>
    <div class="h-[82px] flex items-center pl-[16px] border-b-2 border-[#f0eff5]">Content:<span class="ml-[21px]">Commerce</span></div>
    <div class="h-[130px] pl-[16px] pt-[16px] border-b-2 border-[#f0eff5]">
      <div>Properties:</div>
      <div class="flex items-center"><span class="w-[13px] h-[13px] rounded-full border-2 border-[#666] ml-[18px] mr-[18px]"></span>order:<span class="ml-[21px]">192</span></div>
    </div>
    <div class="h-[272px] pl-[16px] pt-[16px]">
      <div>Box:</div>
      <div class="flex items-center"><span class="w-[13px] h-[13px] rounded-full border-2 border-[#666] ml-[18px] mr-[18px]"></span>l:<span class="ml-[21px]">108.1</span></div>
      <div class="flex items-center"><span class="w-[13px] h-[13px] rounded-full border-2 border-[#666] ml-[18px] mr-[18px]"></span>t:<span class="ml-[21px]">400.76</span></div>
      <div class="flex items-center"><span class="w-[13px] h-[13px] rounded-full border-2 border-[#666] ml-[18px] mr-[18px]"></span>w:<span class="ml-[21px]">44.28</span></div>
      <div class="flex items-center"><span class="w-[13px] h-[13px] rounded-full border-2 border-[#666] ml-[18px] mr-[18px]"></span>h:<span class="ml-[21px]">13.26</span></div>
    </div>
    <div class="h-[82px] bg-[#ecebf1] flex items-center pl-[16px] pr-[12px] text-[#2a2c33] font-bold justify-between"><span class="text-[30px]">Word hierarchy</span><svg class="w-[24px] h-[16px]" viewBox="0 0 24 16"><path d="M2 14L12 3l10 11" fill="none" stroke="#757575" stroke-width="3.500"/></svg></div>
    <div class="h-[80px] flex items-center pl-[15px] text-[#212121]"><svg class="w-[19px] h-[10px]" viewBox="0 0 19 10"><path d="M0 0h19L9.500 10z" fill="#757575"/></svg><span class="ml-[27px]">paragraph</span></div>
    <div class="h-[80px] flex items-center pl-[67px] text-[#212121]"><svg class="w-[19px] h-[10px]" viewBox="0 0 19 10"><path d="M0 0h19L9.500 10z" fill="#757575"/></svg><span class="ml-[27px]">line</span></div>
    <div class="h-[80px] ml-[104px] bg-[#e3e3e3] flex items-center pl-[61px] text-[#212121]">word</div>
    <div class="absolute left-0 top-0 w-full h-[448px] bg-black/[0.02] pointer-events-none"></div>
  </aside>
  <!-- outer scrollbar -->
  <div class="w-[30px] h-full bg-[#f1f1f1] flex flex-col shrink-0 relative">
    <svg class="w-[14px] h-[9px] mt-[11px] ml-[8px]" viewBox="0 0 14 9"><path d="M0 9h14L7 0z" fill="#505050"/></svg>
    <div class="absolute left-[2px] top-[638px] w-[26px] h-[860px] bg-[#bdbdbd]"></div>
    <svg class="w-[14px] h-[9px] mt-auto mb-[11px] ml-[8px]" viewBox="0 0 14 9"><path d="M0 0h14L7 9z" fill="#a3a3a3"/></svg>
  </div>
</main>
</body></html>
